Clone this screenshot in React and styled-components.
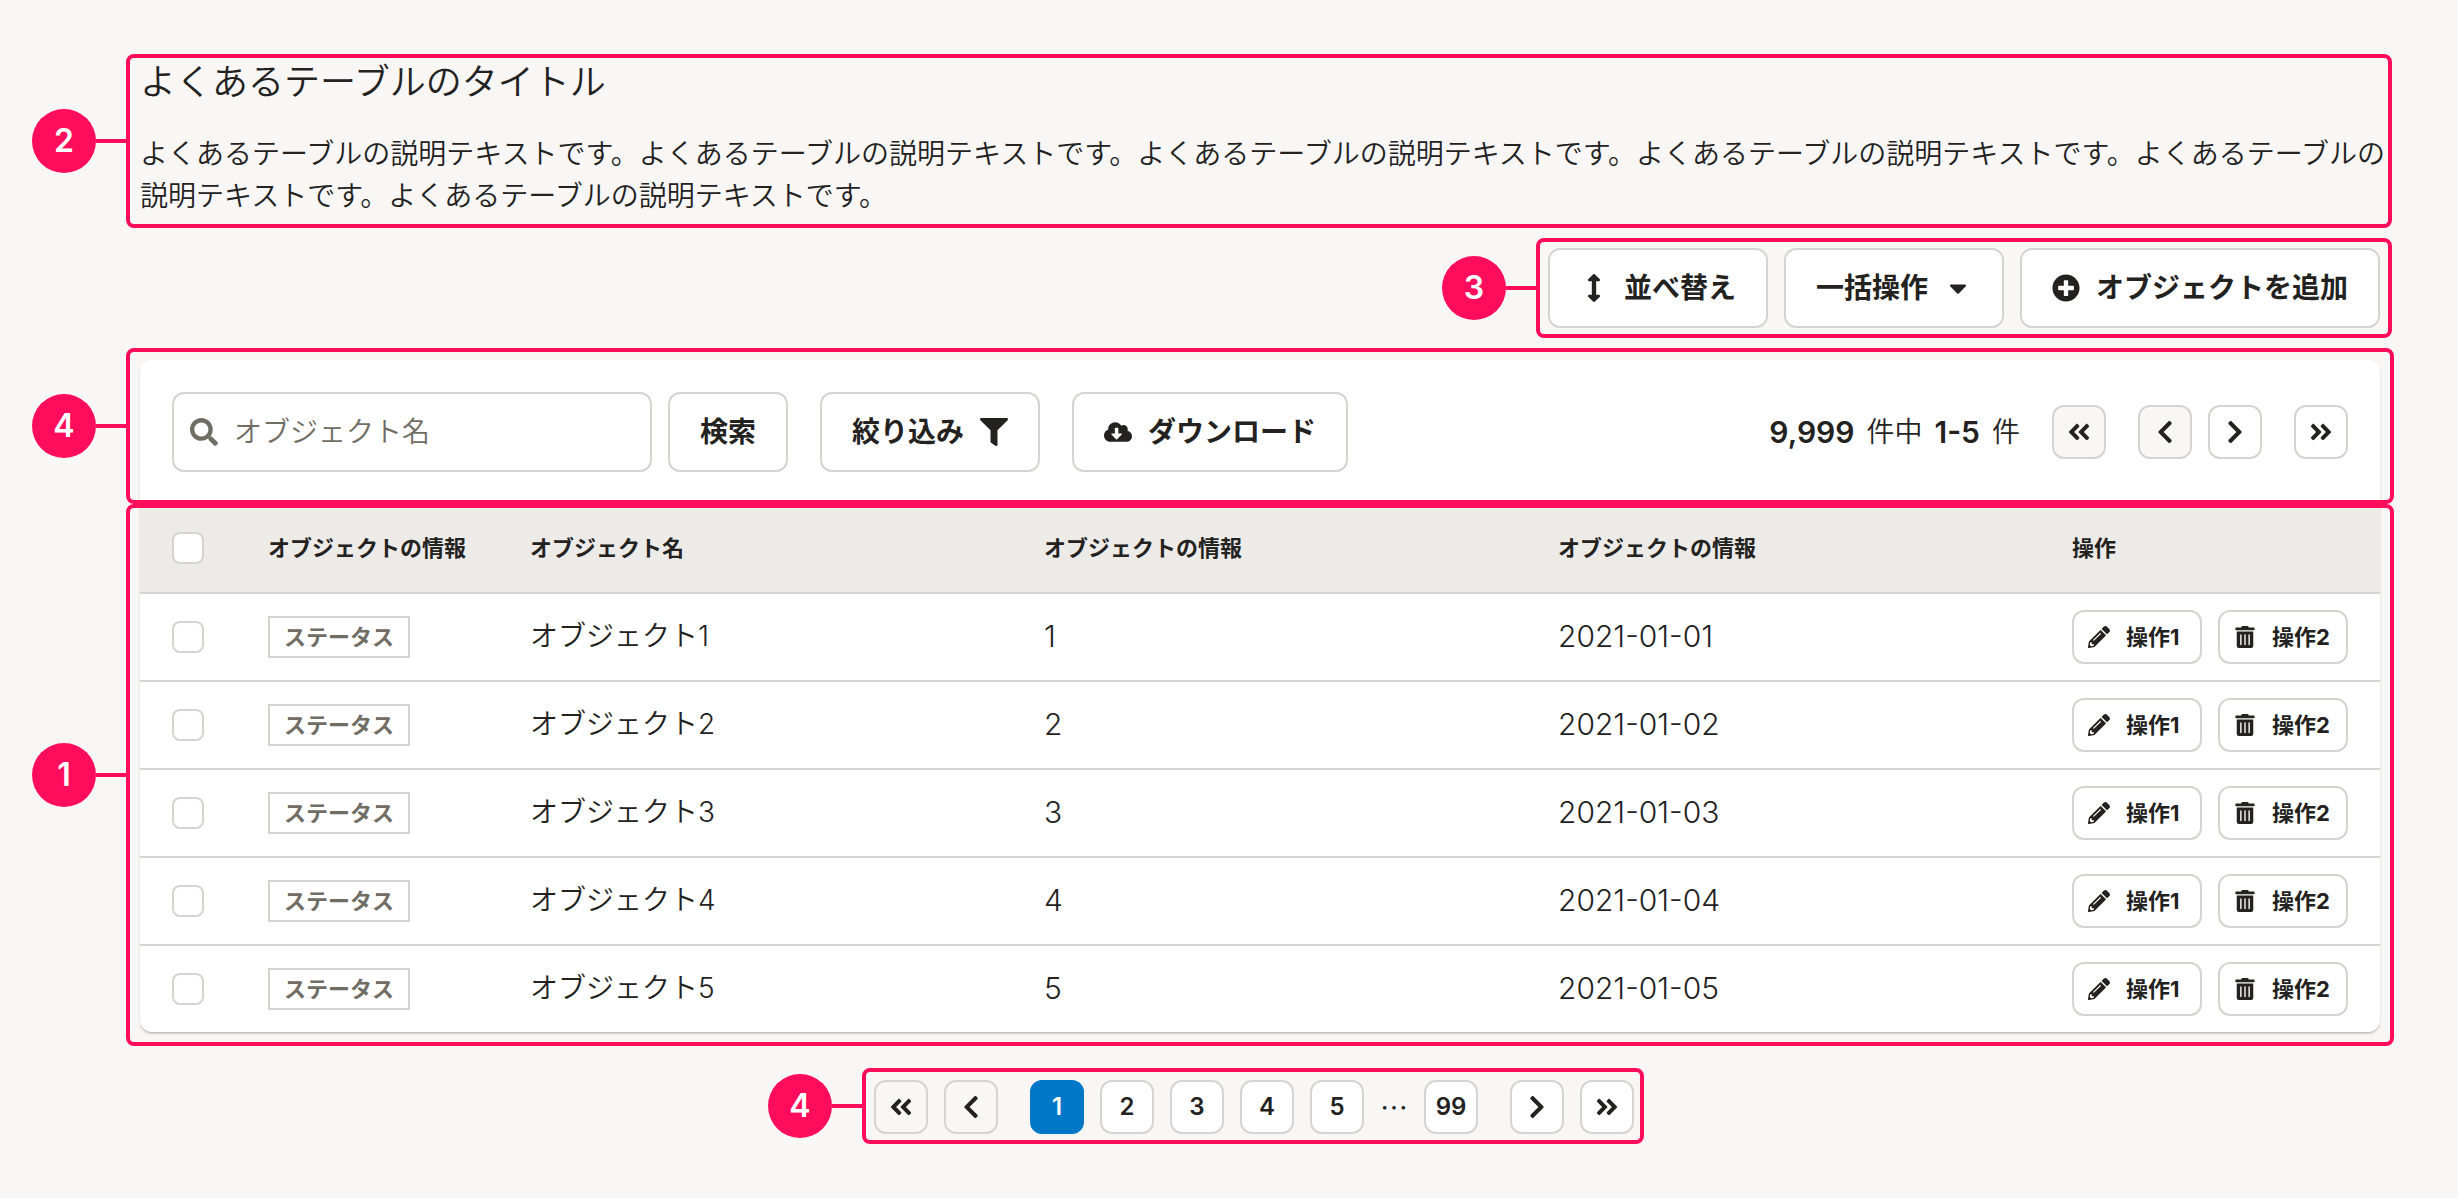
import React from 'react';
import styled, { createGlobalStyle, css } from 'styled-components';
import {
  FaArrowsAltV,
  FaCaretDown,
  FaPlusCircle,
  FaSearch,
  FaFilter,
  FaCloudDownloadAlt,
  FaAngleDoubleLeft,
  FaAngleDoubleRight,
  FaChevronLeft,
  FaChevronRight,
  FaPencilAlt,
  FaTrashAlt,
} from 'react-icons/fa';

const color = {
  text: '#23221e',
  grey: '#706d65',
  border: '#d6d3d0',
  base: '#f8f7f6',
  head: '#edebe8',
  main: '#0077c7',
  mark: '#ff0d5c',
};

const GlobalStyle = createGlobalStyle`
  *, *::before, *::after { box-sizing: border-box; }
  body {
    margin: 0;
    background: ${color.base};
    color: ${color.text};
  }
  body, button, input {
    font-family: Inter, "Noto Sans CJK JP", sans-serif;
    font-size: 28px;
    font-weight: 350;
    line-height: 42px;
  }
`;

const Page = styled.main`
  display: flex;
  flex-direction: column;
  padding: 60px 78px 54px 140px;
`;

const Annotated = styled.section`
  position: relative;
  &::after {
    content: '';
    position: absolute;
    inset: ${(p) => p.$inset};
    border: 4px solid ${color.mark};
    border-radius: 8px;
    pointer-events: none;
  }
`;

const MarkerLayer = styled.div`
  position: absolute;
  inset: ${(p) => p.$inset};
  display: flex;
  align-items: center;
  pointer-events: none;
`;

const MarkerLine = styled.span`
  position: absolute;
  right: 100%;
  width: 30px;
  height: 4px;
  background: ${color.mark};
`;

const MarkerBadge = styled.span`
  position: absolute;
  right: calc(100% + 30px);
  display: grid;
  place-items: center;
  width: 64px;
  height: 64px;
  border-radius: 50%;
  background: ${color.mark};
  color: #fff;
  font-size: 32px;
  font-weight: 600;
`;

function Region({ number, inset, as: As = Annotated, children }) {
  return (
    <As $inset={inset}>
      {children}
      <MarkerLayer $inset={inset}>
        <MarkerBadge>{number}</MarkerBadge>
        <MarkerLine />
      </MarkerLayer>
    </As>
  );
}

const Title = styled.h1`
  margin: 0 0 28px;
  font-size: 36px;
  font-weight: 350;
  line-height: 45px;
`;

const Lead = styled.p`
  margin: 0 -10px 0 0;
`;

const ActionRegion = styled(Annotated)`
  display: flex;
  gap: 16px;
  align-self: flex-end;
  margin-top: 31px;
`;

const Button = styled.button`
  display: inline-flex;
  align-items: center;
  justify-content: center;
  gap: 16px;
  height: 80px;
  padding: 0 30px;
  border: 2px solid ${color.border};
  border-radius: 12px;
  background: #fff;
  color: ${color.text};
  font-weight: 700;
  white-space: nowrap;
  cursor: pointer;
`;

const SmallButton = styled(Button)`
  justify-content: flex-start;
  min-width: 130px;
  height: 54px;
  padding: 0 14px;
  font-size: 22px;
`;

const IconBox = styled.span`
  display: grid;
  place-items: center;
  width: ${(p) => p.$size || 28}px;
  font-size: ${(p) => p.$size || 28}px;
`;

const Card = styled.div`
  margin-top: 32px;
  border-radius: 12px;
  background: #fff;
  box-shadow: 0 2px 3px -1px rgba(0, 0, 0, 0.35);
`;

const Toolbar = styled.div`
  display: flex;
  align-items: center;
  gap: 32px;
  padding: 32px;
`;

const SearchForm = styled.form`
  display: flex;
  gap: 16px;
`;

const SearchField = styled.label`
  display: flex;
  align-items: center;
  gap: 16px;
  width: 480px;
  height: 80px;
  padding: 0 16px;
  border: 2px solid ${color.border};
  border-radius: 12px;
  color: ${color.grey};
`;

const SearchInput = styled.input`
  flex: 1;
  min-width: 0;
  padding: 0;
  border: 0;
  outline: 0;
  background: none;
  color: ${color.text};
  &::placeholder {
    color: ${color.grey};
    opacity: 1;
  }
`;

const PageStatus = styled.div`
  display: flex;
  align-items: center;
  gap: 32px;
  margin-left: auto;
  white-space: nowrap;
`;

const Count = styled.div`
  display: flex;
  align-items: center;
  gap: 12px;
`;

const CountNumber = styled.b`
  font-size: 30px;
  font-weight: 600;
`;

const Pair = styled.div`
  display: flex;
  gap: 16px;
`;

const PageButton = styled.button`
  display: grid;
  place-items: center;
  width: 54px;
  height: 54px;
  padding: 0;
  border: 2px solid ${color.border};
  border-radius: 12px;
  background: #fff;
  color: ${color.text};
  font-size: 24px;
  font-weight: 600;
  ${(p) =>
    p.disabled &&
    css`
      background: ${color.base};
    `}
  ${(p) =>
    p.$current &&
    css`
      border-color: ${color.main};
      background: ${color.main};
      color: #fff;
    `}
`;

const Table = styled.table`
  width: 100%;
  border-collapse: separate;
  border-spacing: 0;
  table-layout: fixed;
`;

const HeadCell = styled.th`
  height: 90px;
  padding: 0;
  border-bottom: 2px solid ${color.border};
  background: ${color.head};
  font-size: 22px;
  text-align: left;
  width: ${(p) => p.$width || 'auto'};
`;

const Cell = styled.td`
  height: 88px;
  padding: 0;
  border-bottom: 2px solid ${color.border};
  tr:last-child > & {
    height: 86px;
    border-bottom: 0;
  }
`;

const TextCell = styled(Cell)`
  padding-bottom: 2px;
  font-size: ${(p) => (p.$numeric ? 30 : 28)}px;
`;

const Checkbox = styled.input`
  display: block;
  appearance: none;
  width: 32px;
  height: 32px;
  margin: 0 0 0 32px;
  border: 2px solid ${color.border};
  border-radius: 8px;
  background: #fff;
  &:checked {
    background: ${color.main};
  }
`;

const Status = styled.span`
  display: block;
  width: fit-content;
  padding: 0 14px;
  border: 2px solid ${color.border};
  color: ${color.grey};
  font-size: 22px;
  font-weight: 700;
  line-height: 38px;
`;

const PagerRegion = styled(Annotated)`
  display: flex;
  align-items: center;
  align-self: center;
  gap: 32px;
  margin: 48px 12px 0 0;
`;

const PageList = styled.div`
  display: flex;
  align-items: center;
  gap: 16px;
`;

const Ellipsis = styled.span`
  width: 28px;
  font-family: "Noto Sans CJK JP", sans-serif;
  text-align: center;
`;

const rows = [1, 2, 3, 4, 5];

export default function App() {
  return (
    <>
      <GlobalStyle />
      <Page lang="ja">
        <Region number={2} inset="-6px -12px -11px -14px">
          <Title>よくあるテーブルのタイトル</Title>
          <Lead>
            よくあるテーブルの説明テキストです。よくあるテーブルの説明テキストです。よくあるテーブルの説明テキストです。よくあるテーブルの説明テキストです。よくあるテーブルの説明テキストです。よくあるテーブルの説明テキストです。
          </Lead>
        </Region>

        <Region number={3} inset="-10px -12px" as={ActionRegion}>
          <Button type="button">
            <IconBox><FaArrowsAltV /></IconBox>
            並べ替え
          </Button>
          <Button type="button">
            一括操作
            <IconBox><FaCaretDown /></IconBox>
          </Button>
          <Button type="button">
            <IconBox><FaPlusCircle /></IconBox>
            オブジェクトを追加
          </Button>
        </Region>

        <Card>
          <Region number={4} inset="-12px -14px 0">
            <Toolbar>
              <SearchForm onSubmit={(e) => e.preventDefault()}>
                <SearchField>
                  <IconBox><FaSearch /></IconBox>
                  <SearchInput type="text" aria-label="オブジェクト名" placeholder="オブジェクト名" />
                </SearchField>
                <Button type="submit">検索</Button>
              </SearchForm>
              <Button type="button">
                絞り込み
                <IconBox><FaFilter /></IconBox>
              </Button>
              <Button type="button">
                <IconBox><FaCloudDownloadAlt /></IconBox>
                ダウンロード
              </Button>
              <PageStatus>
                <Count>
                  <CountNumber>9,999</CountNumber>
                  <span>件中</span>
                  <CountNumber>1-5</CountNumber>
                  <span>件</span>
                </Count>
                <PageButton type="button" disabled aria-label="最初へ"><FaAngleDoubleLeft size={26} /></PageButton>
                <Pair>
                  <PageButton type="button" disabled aria-label="前へ"><FaChevronLeft size={26} /></PageButton>
                  <PageButton type="button" aria-label="次へ"><FaChevronRight size={26} /></PageButton>
                </Pair>
                <PageButton type="button" aria-label="最後へ"><FaAngleDoubleRight size={26} /></PageButton>
              </PageStatus>
            </Toolbar>
          </Region>

          <Region number={1} inset="0 -14px -14px">
            <Table>
              <thead>
                <tr>
                  <HeadCell $width="128px"><Checkbox type="checkbox" aria-label="すべて選択" /></HeadCell>
                  <HeadCell $width="262px">オブジェクトの情報</HeadCell>
                  <HeadCell>オブジェクト名</HeadCell>
                  <HeadCell>オブジェクトの情報</HeadCell>
                  <HeadCell>オブジェクトの情報</HeadCell>
                  <HeadCell $width="308px">操作</HeadCell>
                </tr>
              </thead>
              <tbody>
                {rows.map((n) => (
                  <tr key={n}>
                    <Cell><Checkbox type="checkbox" aria-label={`オブジェクト${n}を選択`} /></Cell>
                    <Cell><Status>ステータス</Status></Cell>
                    <TextCell>オブジェクト{n}</TextCell>
                    <TextCell $numeric>{n}</TextCell>
                    <TextCell $numeric>2021-01-0{n}</TextCell>
                    <Cell>
                      <Pair>
                        <SmallButton type="button">
                          <IconBox $size={22}><FaPencilAlt /></IconBox>
                          操作1
                        </SmallButton>
                        <SmallButton type="button">
                          <IconBox $size={22}><FaTrashAlt /></IconBox>
                          操作2
                        </SmallButton>
                      </Pair>
                    </Cell>
                  </tr>
                ))}
              </tbody>
            </Table>
          </Region>
        </Card>

        <Region number={4} inset="-12px -10px -10px -12px" as={PagerRegion}>
          <Pair>
            <PageButton type="button" disabled aria-label="最初へ"><FaAngleDoubleLeft size={26} /></PageButton>
            <PageButton type="button" disabled aria-label="前へ"><FaChevronLeft size={26} /></PageButton>
          </Pair>
          <PageList>
            {rows.map((n) => (
              <PageButton key={n} type="button" $current={n === 1}>{n}</PageButton>
            ))}
            <Ellipsis>…</Ellipsis>
            <PageButton type="button">99</PageButton>
          </PageList>
          <Pair>
            <PageButton type="button" aria-label="次へ"><FaChevronRight size={26} /></PageButton>
            <PageButton type="button" aria-label="最後へ"><FaAngleDoubleRight size={26} /></PageButton>
          </Pair>
        </Region>
      </Page>
    </>
  );
}
